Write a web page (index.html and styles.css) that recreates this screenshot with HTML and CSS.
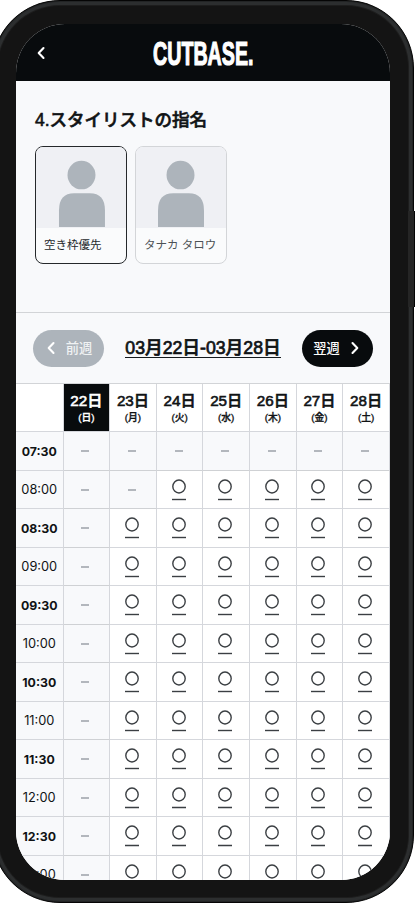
FILE: index.html
```html
<!DOCTYPE html>
<html lang="ja">
<head>
<meta charset="utf-8">
<title>CUTBASE.</title>
<link rel="stylesheet" href="styles.css">
</head>
<body>
<div class="phone">
  <main class="screen">
    <header class="bar">
      <svg class="back" viewBox="0 0 8 14"><path d="M6.5 2 1.7 7l4.8 5"/></svg>
      <svg class="logo" viewBox="0 0 104 32"><text x="1" y="27.500" textLength="100.500" lengthAdjust="spacingAndGlyphs">CUTBASE.</text></svg>
    </header>
    <section class="stylist">
      <h1>4.スタイリストの指名</h1>
      <div class="cards">
        <div class="card selected">
          <div class="photo"><svg viewBox="0 0 92 81"><ellipse cx="46.5" cy="27.8" rx="14.300" ry="14.6"/><path d="M23.500 81V64Q23.500 46.500 39 46.500H55Q70.500 46.500 70.500 64V81Z"/></svg></div>
          <p>空き枠優先</p>
        </div>
        <div class="card">
          <div class="photo"><svg viewBox="0 0 92 81"><ellipse cx="45.500" cy="27.8" rx="14.300" ry="14.6"/><path d="M22.500 81V64Q22.500 46.500 38 46.500H54Q69.500 46.500 69.500 64V81Z"/></svg></div>
          <p>タナカ タロウ</p>
        </div>
      </div>
    </section>
    <nav class="week">
      <div class="pill disabled"><svg viewBox="0 0 8 14"><path d="M6.5 2 1.7 7l4.800 5"/></svg><span>前週</span></div>
      <div class="range">03月22日-03月28日</div>
      <div class="pill"><span>翌週</span><svg viewBox="0 0 8 14"><path d="M1.500 2 6.300 7 1.500 12"/></svg></div>
    </nav>
    <div class="grid" id="grid"></div>
  </main>
</div>
<div class="power"></div>
<script src="script.js"></script>
</body>
</html>
```
FILE: styles.css
```css
* { box-sizing: border-box; }
body {
  margin: 0;
  width: 415px;
  height: 904px;
  position: relative;
  overflow: hidden;
  background: #fff;
  color: #101315;
  font-family: Inter, "Noto Sans CJK JP", sans-serif;
}
.phone {
  width: 422px;
  height: 903px;
  margin-left: -8px;
  padding: 23px 23px 22px;
  border: 1px solid #050505;
  border-radius: 68px;
  background: #141414;
  box-shadow: inset 0 0 0 1px #222425, inset 0 0 0 4px #2c2e2f, inset 0 0 0 5px #1d1d1d;
}
.power {
  position: absolute;
  right: 0;
  top: 211px;
  width: 7px;
  height: 96px;
  background: #252525;
  border-right: 1px solid #050505;
}
.screen {
  width: 374px;
  height: 856px;
  border-radius: 49px;
  overflow: hidden;
  background: #f8f9fb;
}
.bar {
  height: 57px;
  display: grid;
  grid-template-columns: 136px 104px;
  align-items: center;
  background: #080b0d;
}
.back { width: 8px; height: 14px; margin-left: 21px; }
.back path, .pill path {
  fill: none;
  stroke: #fff;
  stroke-width: 2.1;
  stroke-linecap: round;
  stroke-linejoin: round;
}
.logo { width: 104px; height: 32px; overflow: visible; }
.logo text {
  font: 700 33.500px "Liberation Sans Narrow", "Liberation Sans", sans-serif;
  fill: #fff;
  stroke: #fff;
  stroke-width: 1.200;
}
.stylist { height: 231px; padding: 26px 19px 0; }
h1 {
  margin: 0;
  height: 26px;
  font: 500 17.500px/26px "Liberation Sans", "Noto Sans CJK JP", sans-serif;
  -webkit-text-stroke: 0.6px currentColor;
}
.cards { display: flex; gap: 8px; margin-top: 13px; }
.card {
  width: 92px;
  height: 118px;
  border: 1px solid #d3d5d8;
  border-radius: 8px;
  overflow: hidden;
  background: #fafbfc;
  color: #4d5256;
}
.card.selected { border-color: #25282b; color: #25282b; }
.photo { height: 81px; background: #eff0f4; }
.photo svg { display: block; width: 90px; height: 81px; fill: #adb4bb; }
.card p {
  margin: 0;
  padding-left: 8px;
  font: 400 11.500px/35px "Liberation Sans", "Noto Sans CJK JP", sans-serif;
  white-space: nowrap;
}
.week {
  height: 71px;
  padding: 0 17px;
  border-top: 1px solid #d2d4d7;
  display: flex;
  align-items: center;
  justify-content: space-between;
}
.pill {
  width: 71px;
  height: 37px;
  border-radius: 19px;
  display: flex;
  align-items: center;
  justify-content: center;
  gap: 11px;
  background: #080b0d;
  color: #fff;
  font: 500 13.300px/35px "Noto Sans CJK JP", sans-serif;
}
.pill span { height: 37px; }
.pill svg { width: 8px; height: 14px; }
.pill.disabled { background: #adb4bb; padding-left: 2px; }
.pill:last-child { padding-right: 3px; }
.pill.disabled span { color: #f0f2f3; }
.range {
  height: 20px;
  font: 500 17.700px/20px "Liberation Sans", "Noto Sans CJK JP", sans-serif;
  -webkit-text-stroke: 0.7px currentColor;
  border-bottom: 1px solid #15191c;
  white-space: nowrap;
}
.grid {
  display: grid;
  grid-template-columns: 47.500px repeat(7, 46.640px);
  grid-template-rows: 48px;
  grid-auto-rows: 38.500px;
  border-top: 1px solid #d2d4d7;
}
.grid > div {
  border-right: 1px solid #d5d7dc;
  border-bottom: 1px solid #d5d7dc;
  display: flex;
  flex-direction: column;
  align-items: center;
  justify-content: center;
  background: #fff;
}
.grid > .time { background: #f8f9fb; font-size: 12.800px; padding-top: 1px; }
.grid > .half { font-weight: 700; font-size: 12.300px; }
.grid > .closed, .grid > .open { padding: 1px 2px 0 0; }
.grid > .closed { background: #f8f9fb; border-bottom-color: #cfd1d4; }
.closed::after { content: ""; width: 8px; height: 2px; background: #b3b7bd; }
.grid > .day {
  padding-top: 2px;
  font: 500 15.200px/18px "Liberation Sans", "Noto Sans CJK JP", sans-serif;
  -webkit-text-stroke: 0.6px currentColor;
}
.day small {
  display: block;
  font-size: 9.800px;
  line-height: 16px;
  text-align: center;
  -webkit-text-stroke-width: 0.35px;
}
.grid > .today { background: #080b0d; color: #fff; }
.open svg { width: 14px; height: 22px; fill: none; stroke: #3b3f43; stroke-width: 1.400; }
```
FILE: script.js
```js
const grid = document.getElementById("grid");
const add = (cls, html = "") =>
  grid.insertAdjacentHTML("beforeend", `<div class="${cls}">${html}</div>`);

add("corner");
[..."日月火水木金土"].forEach((name, i) =>
  add(i ? "day" : "day today", `${22 + i}日<small>(${name})</small>`));

const circle = '<svg viewBox="0 0 14 22"><ellipse cx="7" cy="7.5" rx="6.200" ry="6.500"/><path d="M0 20.500H14"/></svg>';
for (let row = 0; row < 12; row++) {
  const hour = String(Math.floor((15 + row) / 2)).padStart(2, "0");
  const half = row % 2 === 0;
  add(half ? "time half" : "time", `${hour}:${half ? "30" : "00"}`);
  for (let day = 0; day < 7; day++) {
    const open = row > 0 && day > 0 && !(row === 1 && day === 1);
    add(open ? "open" : "closed", open ? circle : "");
  }
}
```
